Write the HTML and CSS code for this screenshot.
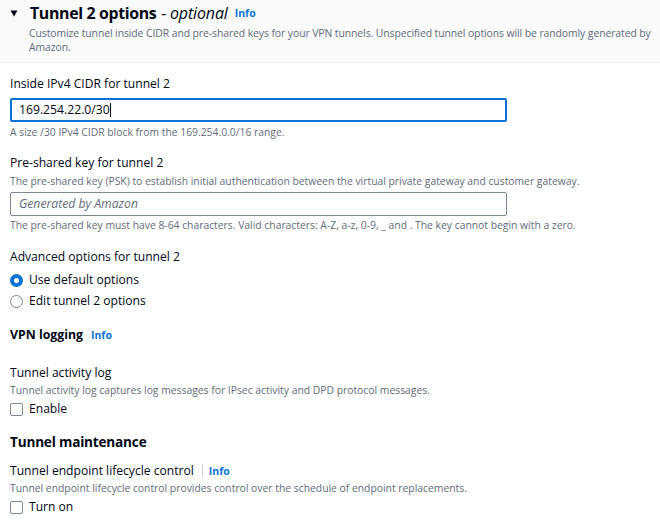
FILE: index.html
```html
<!DOCTYPE html>
<html>
<head>
<meta charset="utf-8">
<link rel="stylesheet" href="styles.css">
</head>
<body>
<div class="header">
  <div class="title-row">
    <svg class="caret" width="8" height="7" viewBox="0 0 8 7"><polygon points="0.5,0.5 7.5,0.5 4,6.5" fill="#000716"/></svg>
    <h2 class="title">Tunnel 2 options <span class="optional">- optional</span></h2>
    <a class="info">Info</a>
  </div>
  <p class="header-desc">Customize tunnel inside CIDR and pre-shared keys for your VPN tunnels. Unspecified tunnel options will be randomly generated by Amazon.</p>
</div>
<div class="content">
  <div class="field f-cidr">
    <label class="label">Inside IPv4 CIDR for tunnel 2</label>
    <div class="input focused">169.254.22.0/30<span class="caret-cursor"></span></div>
    <div class="hint">A size /30 IPv4 CIDR block from the 169.254.0.0/16 range.</div>
  </div>
  <div class="field f-psk">
    <label class="label">Pre-shared key for tunnel 2</label>
    <div class="desc">The pre-shared key (PSK) to establish initial authentication between the virtual private gateway and customer gateway.</div>
    <div class="input placeholder">Generated by Amazon</div>
    <div class="hint">The pre-shared key must have 8-64 characters. Valid characters: A-Z, a-z, 0-9, _ and . The key cannot begin with a zero.</div>
  </div>
  <div class="field f-adv">
    <label class="label">Advanced options for tunnel 2</label>
    <div class="radios">
      <div class="choice"><span class="radio checked"></span>Use default options</div>
      <div class="choice"><span class="radio"></span>Edit tunnel 2 options</div>
    </div>
  </div>
  <div class="subhead"><h3 class="h3">VPN logging</h3><a class="info">Info</a></div>
  <div class="field f-log">
    <label class="label">Tunnel activity log</label>
    <div class="desc">Tunnel activity log captures log messages for IPsec activity and DPD protocol messages.</div>
    <div class="choice"><span class="checkbox"></span>Enable</div>
  </div>
  <h3 class="h3 big">Tunnel maintenance</h3>
  <div class="field f-maint">
    <div class="label-row"><label class="label">Tunnel endpoint lifecycle control</label><span class="divider"></span><a class="info">Info</a></div>
    <div class="desc">Tunnel endpoint lifecycle control provides control over the schedule of endpoint replacements.</div>
    <div class="choice"><span class="checkbox"></span>Turn on</div>
  </div>
</div>
</body>
</html>
```
FILE: styles.css
```css
* { box-sizing: border-box; }
html, body { margin: 0; padding: 0; background: #fff; }
body {
  font-family: "Open Sans", "Noto Sans", sans-serif;
  color: #000716;
  width: 660px;
  height: 525px;
  overflow: hidden;
}
.header {
  background: #fafafa;
  border-bottom: 1px solid #e9ebed;
  padding: 2px 3px 0 10px;
  height: 63px;
}
.title-row { display: flex; align-items: center; }
.caret { margin-right: 12px; margin-top: 1px; }
.title {
  margin: 0;
  font-size: 15.9px;
  font-weight: 700;
  line-height: 22px;
  letter-spacing: -0.35px;
}
.optional { font-style: italic; font-weight: 400; margin-left: 1px; letter-spacing: -0.1px; }
.info {
  color: #0972d3;
  font-size: 10.5px;
  font-weight: 700;
  margin-left: 7px;
}
.header-desc {
  margin: 2px 0 0 19px;
  font-size: 10.4px;
  letter-spacing: -0.08px;
  line-height: 14px;
  color: #5f6b7a;
}
.content { padding: 12px 10px 0 10px; }
.field { display: flex; flex-direction: column; }
.label { font-size: 12.1px; line-height: 18px; color: #000716; }
.desc, .hint { font-size: 10.35px; line-height: 15px; color: #5f6b7a; }
.input {
  width: 497px;
  height: 24px;
  border: 1px solid #7d8998;
  border-radius: 2px;
  font-size: 12.2px;
  line-height: 22px;
  padding: 0 8px;
  display: flex;
  align-items: center;
}
.input.focused { border: 2px solid #0972d3; padding-left: 7px; margin: 5px 0 3px; }
.caret-cursor { display: inline-block; width: 1px; height: 14px; background: #000716; margin-left: 0; }
.input.placeholder { color: #5f6b7a; font-style: italic; margin: 3px 0 2px; }
.f-psk { margin-top: 14px; }
.f-psk .desc { margin-top: 2px; }
.f-adv { margin-top: 15px; }
.radios { display: flex; flex-direction: column; gap: 3px; margin-top: 5px; }
.choice { display: flex; align-items: center; font-size: 12.1px; line-height: 18px; }
.radio {
  width: 13px; height: 13px; border-radius: 50%;
  border: 1.5px solid #7d8998; margin-right: 6px; background: #fff;
}
.radio.checked { border: 4px solid #0972d3; }
.checkbox {
  width: 13px; height: 13px; border-radius: 2px;
  border: 1.5px solid #7d8998; margin-right: 6px; background: #fff;
}
.subhead { display: flex; align-items: center; margin-top: 16px; }
.h3 { margin: 0; font-size: 12.3px; font-weight: 700; line-height: 18px; }
.subhead .info { margin-left: 8px; }
.f-log { margin-top: 20px; }
.f-log .desc { margin-top: 1px; }
.f-log .choice { margin-top: 2px; }
.h3.big { font-size: 13.6px; letter-spacing: -0.2px; margin-top: 15px; }
.f-maint { margin-top: 11px; }
.label-row { display: flex; align-items: center; }
.divider { width: 1px; height: 14px; background: #d1d5db; margin: 0 6px 0 8px; }
.label-row .info { margin-left: 0; }
.f-maint .desc { margin-top: 1px; }
.f-maint .choice { margin-top: 2px; }
```
